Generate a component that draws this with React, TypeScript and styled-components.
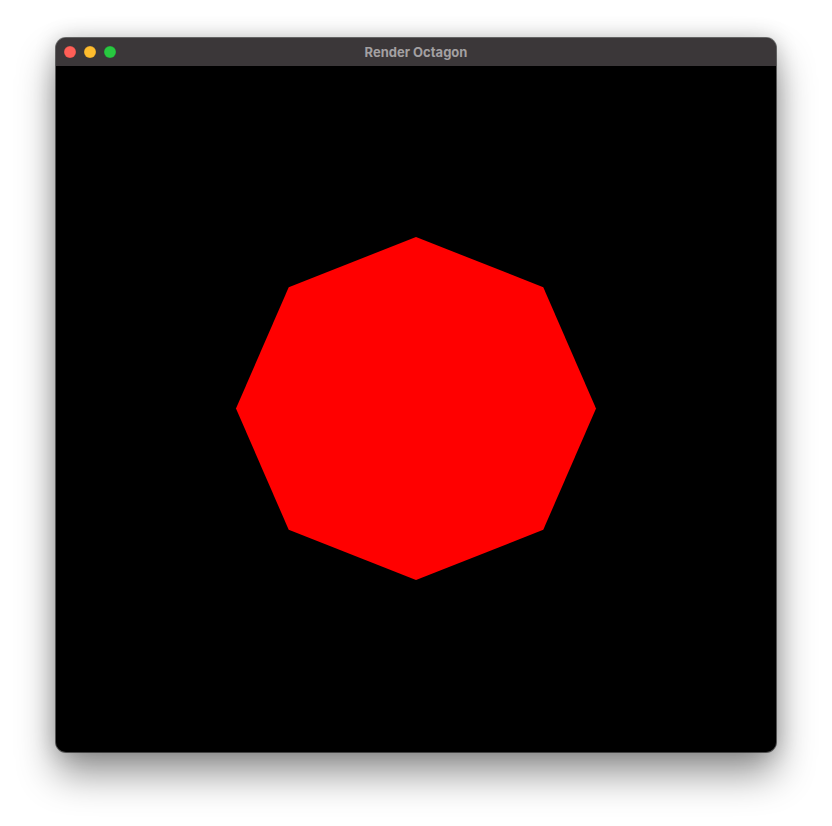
import React from "react";
import styled, { createGlobalStyle } from "styled-components";

const Global = createGlobalStyle`
  html, body { margin: 0; padding: 0; background: #ffffff; }
  body { width: 832px; height: 826px; overflow: hidden; font-family: "Inter", "Liberation Sans", sans-serif; }
`;

const Page = styled.div`
  width: 832px;
  height: 826px;
  box-sizing: border-box;
  padding: 38px 0 0 56px;
  display: flex;
  align-items: flex-start;
`;

const Window = styled.div`
  width: 720px;
  height: 714px;
  border-radius: 10px;
  overflow: hidden;
  display: flex;
  flex-direction: column;
  background: #000;
  box-shadow:
    0 0 0 1px rgba(0, 0, 0, 0.55),
    inset 0 0 0 1px rgba(255, 255, 255, 0.18),
    0 22px 38px rgba(0, 0, 0, 0.42),
    0 0 22px rgba(0, 0, 0, 0.2);
`;

const TitleBar = styled.div`
  height: 28px;
  flex: 0 0 28px;
  background: #3b3739;
  display: flex;
  align-items: center;
  position: relative;
  padding-left: 8px;
  gap: 8px;
`;

const Light = styled.span<{ $color: string }>`
  width: 12px;
  height: 12px;
  border-radius: 50%;
  background: ${(p) => p.$color};
  box-shadow: inset 0 0 0 0.5px rgba(0, 0, 0, 0.15);
`;

const Title = styled.div`
  position: absolute;
  left: 0;
  right: 0;
  top: 0;
  bottom: 0;
  display: flex;
  align-items: center;
  justify-content: center;
  font-size: 13px;
  font-weight: 700;
  color: #a3a0a2;
  pointer-events: none;
`;

const Content = styled.div`
  flex: 1;
  background: #000;
  display: flex;
`;

const Canvas = styled.svg`
  width: 720px;
  height: 686px;
  display: block;
`;

function octagonPoints(cx: number, cy: number, rx: number, ry: number) {
  const pts: string[] = [];
  for (let i = 0; i < 8; i++) {
    const a = (Math.PI / 4) * i;
    pts.push(`${(cx + rx * Math.cos(a)).toFixed(2)},${(cy - ry * Math.sin(a)).toFixed(2)}`);
  }
  return pts.join(" ");
}

export default function App() {
  return (
    <>
      <Global />
      <Page>
        <Window>
          <TitleBar>
            <Light $color="#ff5f57" />
            <Light $color="#febc2e" />
            <Light $color="#28c840" />
            <Title>Render Octagon</Title>
          </TitleBar>
          <Content>
            <Canvas viewBox="0 0 720 686">
              <polygon points={octagonPoints(360, 342.5, 180, 171.5)} fill="#ff0000" />
            </Canvas>
          </Content>
        </Window>
      </Page>
    </>
  );
}
